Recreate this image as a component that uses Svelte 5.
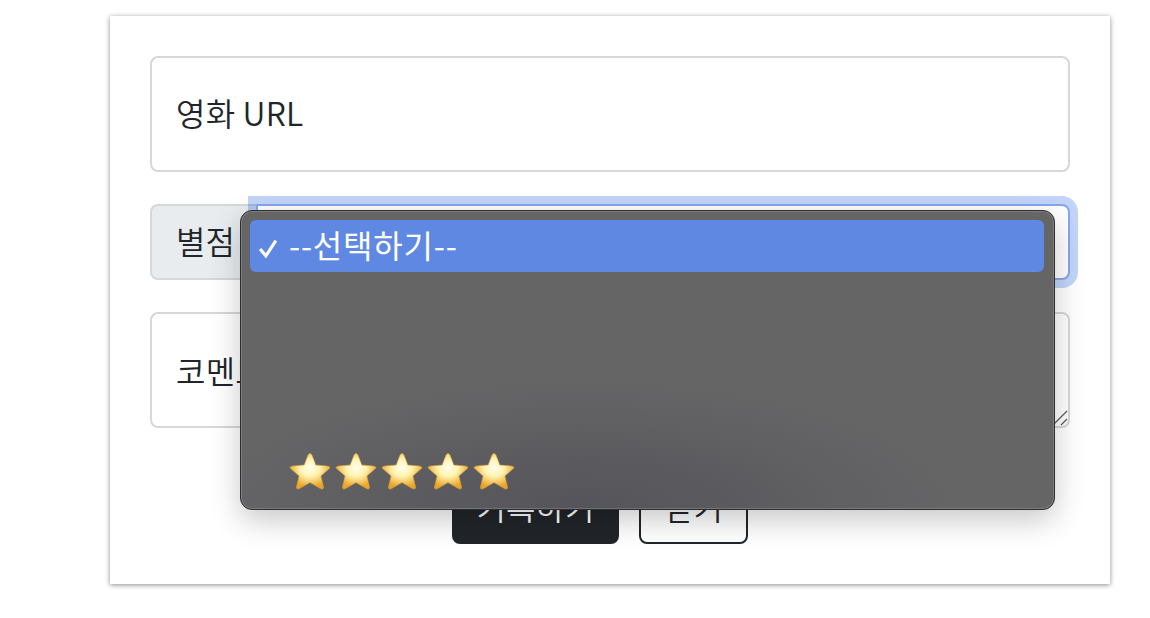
<script lang="ts">
  const stars = [0, 1, 2, 3, 4]
</script>

<div class="page">
  <form class="card" on:submit|preventDefault>
    <input class="field" type="text" placeholder="영화 URL" />

    <div class="rating-group">
      <span class="group-label">별점</span>
      <div class="select-box"></div>
    </div>

    <div class="comment-wrap">
      <textarea class="field comment" placeholder="코멘트를 입력해주세요"></textarea>
      <svg class="grip" viewBox="0 0 16 16" width="16" height="16" aria-hidden="true">
        <path d="M1 15 L15 1 M9 15 L15 9" fill="none" stroke="#5c5c5c" stroke-width="1.3" />
      </svg>
    </div>

    <div class="actions">
      <button class="btn primary" type="submit">기록하기</button>
      <button class="btn outline" type="button">닫기</button>
    </div>

    <div class="popup" role="listbox">
      <div class="option selected" role="option" aria-selected="true">
        <svg class="check" viewBox="0 0 20 20" width="21" height="21" aria-hidden="true">
          <path d="M2 10.5 L7.5 17 L17 2.5" fill="none" stroke="#fff" stroke-width="3" />
        </svg>
        <span>--선택하기--</span>
      </div>
      <div class="option stars" role="option" aria-selected="false">
        {#each stars as s (s)}
          <svg viewBox="0 0 46 46" width="46" height="46" aria-hidden="true">
            <defs>
              <radialGradient id="star-{s}" cx="50%" cy="40%" r="55%">
                <stop offset="0%" stop-color="#fffef0" />
                <stop offset="45%" stop-color="#fff3b0" />
                <stop offset="100%" stop-color="#eba525" />
              </radialGradient>
            </defs>
            <path
              d="M23 4.5 C24 4.5 24.6 5.3 25.2 6.6 L28.8 16 L39.6 16.9 C42.8 17.3 43.6 18.3 42.4 19.5 L33.9 27 L36.4 37.6 C36.8 40 35.5 40.6 33.5 39.6 L23 33.6 L12.5 39.6 C10.5 40.6 9.2 40 9.6 37.6 L12.1 27 L3.6 19.5 C2.4 18.3 3.2 17.3 6.4 16.9 L17.2 16 L20.8 6.6 C21.4 5.3 22 4.5 23 4.5 Z"
              fill="url(#star-{s})"
              stroke="#d8a03c"
              stroke-width="0.6"
            />
          </svg>
        {/each}
      </div>
    </div>
  </form>
</div>

<style>
  :global(body) {
    margin: 0;
    background: #fff;
  }

  .page {
    padding: 16px 40px 34px 110px;
    font-family: "Noto Sans CJK KR", "Noto Sans", sans-serif;
    font-weight: 350;
    color: #212529;
  }

  .card {
    position: relative;
    display: flex;
    flex-direction: column;
    gap: 32px;
    box-sizing: border-box;
    width: 1000px;
    height: 568px;
    padding: 40px;
    background: #fff;
    box-shadow: 0 1px 5px rgba(0, 0, 0, 0.45);
  }

  .field {
    display: block;
    box-sizing: border-box;
    width: 100%;
    height: 116px;
    padding: 0 24px 4px;
    border: 2px solid #d5d7da;
    border-radius: 8px;
    outline: none;
    background: #fff;
    color: #212529;
    font: inherit;
    font-size: 32px;
    letter-spacing: 0.2px;
  }

  .field::placeholder {
    color: #212529;
    opacity: 1;
  }

  .comment-wrap {
    position: relative;
    height: 116px;
  }

  .comment {
    padding-top: 33px;
    line-height: 46px;
    resize: none;
  }

  .grip {
    position: absolute;
    right: 2px;
    bottom: 2px;
  }

  .rating-group {
    display: flex;
    height: 76px;
  }

  .group-label {
    display: flex;
    align-items: center;
    box-sizing: border-box;
    width: 106px;
    padding: 0 0 4px 24px;
    border: 2px solid #d5d7da;
    border-right: 0;
    border-radius: 8px 0 0 8px;
    background: #e9ecef;
    font-size: 32px;
  }

  .select-box {
    flex: 1;
    border: 2px solid #86a7ee;
    border-radius: 0 8px 8px 0;
    background: #fff;
    box-shadow: 0 0 0 8px rgba(13, 86, 233, 0.25);
  }

  .actions {
    display: flex;
    justify-content: center;
    gap: 20px;
    margin-top: 16px;
    padding-right: 20px;
  }

  .btn {
    box-sizing: border-box;
    height: 68px;
    padding: 0 0 8px;
    border-radius: 8px;
    font: inherit;
    font-size: 32px;
  }

  .primary {
    width: 167px;
    border: 2px solid #212529;
    background: #212529;
    color: #fff;
  }

  .outline {
    width: 109px;
    border: 2px solid #212529;
    background: #fff;
    color: #212529;
  }

  /* open native menu, sits over the form */
  .popup {
    position: absolute;
    left: 130px;
    top: 194px;
    box-sizing: border-box;
    width: 815px;
    height: 300px;
    padding: 9px 10px 9px 9px;
    border: 1px solid #2e2e30;
    border-radius: 12px;
    background:
      radial-gradient(ellipse 380px 130px at 42% 100%, #54545a, rgba(84, 84, 90, 0) 100%),
      #666566;
    box-shadow:
      inset 0 0 0 1px rgba(255, 255, 255, 0.16),
      0 10px 30px rgba(0, 0, 0, 0.22);
    color: #fff;
    font-size: 32px;
  }

  .option {
    display: flex;
    align-items: center;
    height: 52px;
    padding-left: 39px;
    border-radius: 6px;
    position: relative;
  }

  .selected {
    padding-bottom: 4px;
    box-sizing: border-box;
    background: #5f88e3;
    font-weight: 400;
    letter-spacing: 0.8px;
  }

  .check {
    position: absolute;
    left: 8px;
    top: 18px;
  }

  .stars {
    margin-top: 174px;
    padding-left: 37px;
  }
</style>
